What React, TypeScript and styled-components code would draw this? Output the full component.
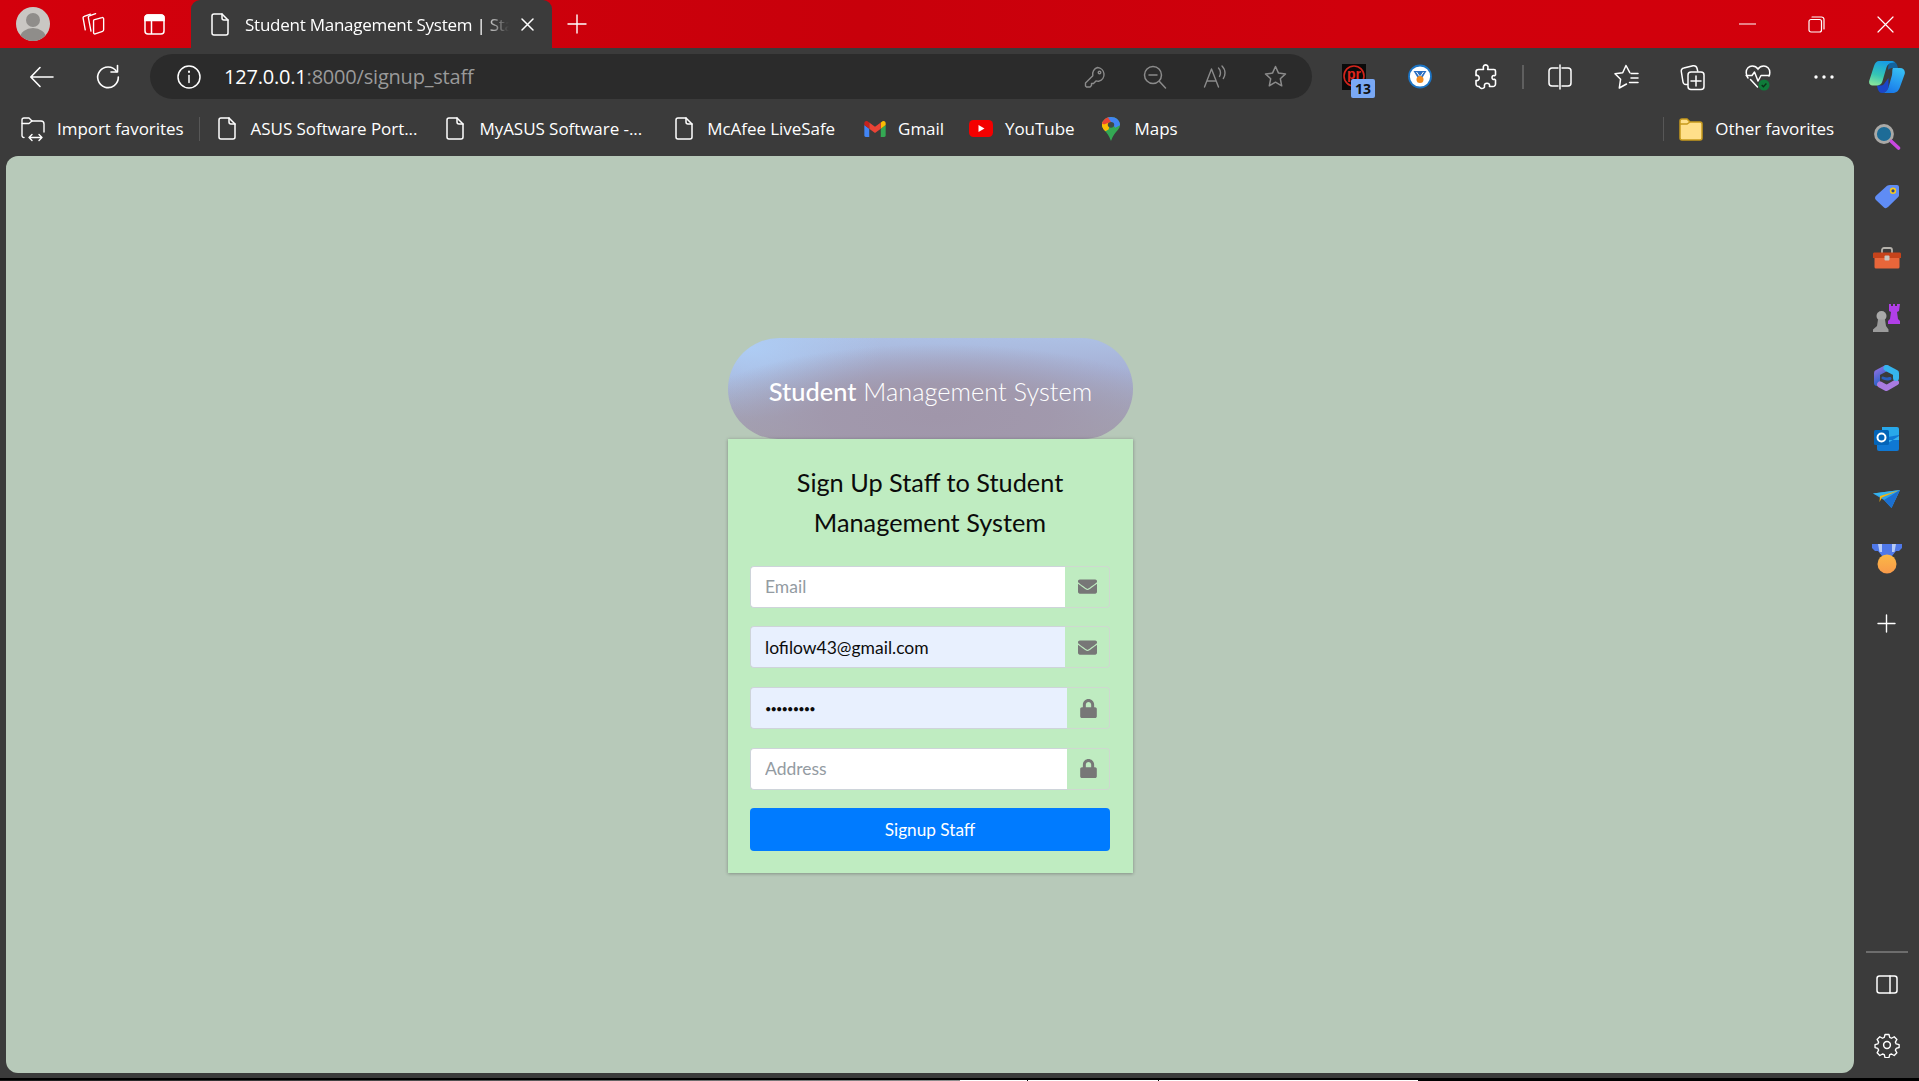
import styled, { createGlobalStyle } from "styled-components";
import type { ReactNode } from "react";
import { FaEnvelope, FaLock } from "react-icons/fa";

const GlobalStyle = createGlobalStyle`
  html, body {
    margin: 0;
    padding: 0;
    background: #3b3b3b;
    overflow: hidden;
  }
  * {
    box-sizing: border-box;
  }
`;

const chromeFont = `"Open Sans", "Noto Sans", sans-serif`;
const pageFont = `Lato, "Noto Sans", sans-serif`;

const Window = styled.div`
  width: 1919px;
  height: 1081px;
  display: flex;
  flex-direction: column;
  background: #3b3b3b;
  color: #fff;
  font-family: ${chromeFont};
  overflow: hidden;
`;

/* title bar */
const TitleBar = styled.div`
  height: 48px;
  flex: none;
  display: flex;
  align-items: center;
  padding-left: 16px;
  background: linear-gradient(90deg, #d3000c 0%, #c8000b 45%, #d0000c 70%, #d2000c 100%);
`;

const Avatar = styled.div`
  width: 34px;
  height: 34px;
  flex: none;
  display: flex;
`;

const TitleButton = styled.div<{ $w: number; $ml?: number }>`
  width: ${(p) => p.$w}px;
  height: 48px;
  flex: none;
  margin-left: ${(p) => p.$ml ?? 0}px;
  display: flex;
  align-items: center;
  justify-content: center;
`;

const Tab = styled.div`
  width: 361px;
  height: 48px;
  margin-left: 5px;
  flex: none;
  display: flex;
  align-items: center;
  padding-left: 20px;
  background: #3b3b3b;
  border-radius: 9px 9px 0 0;
`;

const TabTitle = styled.div`
  width: 264px;
  margin: 0 12px 0 16px;
  font-size: 17px;
  letter-spacing: -0.25px;
  white-space: nowrap;
  overflow: hidden;
  -webkit-mask-image: linear-gradient(90deg, #000 90%, transparent 100%);
  mask-image: linear-gradient(90deg, #000 90%, transparent 100%);
`;

const WindowControls = styled.div`
  margin-left: auto;
  display: flex;
`;

/* address row */
const Toolbar = styled.div`
  height: 58px;
  flex: none;
  display: flex;
  align-items: center;
  padding: 0 0 1px 9px;
`;

const Slot = styled.div<{ $w?: number }>`
  width: ${(p) => p.$w ?? 66}px;
  height: 44px;
  flex: none;
  display: flex;
  align-items: center;
  justify-content: center;
  position: relative;
`;

const AddressBar = styled.div`
  width: 1162px;
  height: 45px;
  margin: 0 9px;
  flex: none;
  display: flex;
  align-items: center;
  padding: 0 7px 0 27px;
  background: #2b2b2b;
  border-radius: 23px;
`;

const Url = styled.div`
  margin-left: 23px;
  font-size: 20px;
  letter-spacing: -0.2px;
  color: #fff;
  span {
    color: #9a9a9a;
  }
`;

const AddressTools = styled.div`
  margin-left: auto;
  display: flex;
`;

const ToolSeparator = styled.div`
  width: 2px;
  height: 24px;
  margin: 0 3px;
  flex: none;
  background: #5f5f5f;
`;

const Badge = styled.div`
  position: absolute;
  left: 30px;
  top: 24px;
  width: 24px;
  height: 19px;
  border-radius: 2px;
  background: #7aa9f5;
  color: #101010;
  font-size: 14px;
  font-weight: 700;
  line-height: 19px;
  text-align: center;
`;

/* everything under the address row */
const Main = styled.div`
  flex: 1;
  min-height: 0;
  display: flex;
`;

const LeftColumn = styled.div`
  width: 1854px;
  flex: none;
  display: flex;
  flex-direction: column;
`;

const FavoritesBar = styled.div`
  height: 50px;
  flex: none;
  display: flex;
  align-items: center;
  padding: 0 20px 5px 21px;
  font-size: 17px;
  letter-spacing: -0.05px;
  white-space: nowrap;
`;

const Favorite = styled.div<{ $gap: number; $ml: number }>`
  display: flex;
  align-items: center;
  gap: ${(p) => p.$gap}px;
  margin-left: ${(p) => p.$ml}px;
`;

const FavSeparator = styled.div<{ $ml: number; $auto?: boolean }>`
  width: 1px;
  height: 24px;
  margin-left: ${(p) => (p.$auto ? "auto" : `${p.$ml}px`)};
  background: #575757;
`;

const Content = styled.div`
  flex: 1;
  min-height: 0;
  margin: 0 0 5px 6px;
  padding: 182px 0 0 1px;
  display: flex;
  flex-direction: column;
  align-items: center;
  background: #b7c9b9;
  border-radius: 12px;
  font-family: ${pageFont};
`;

const Pill = styled.div`
  width: 405px;
  height: 101px;
  flex: none;
  padding-top: 4px;
  display: flex;
  align-items: center;
  justify-content: center;
  border-radius: 51px 51px 50px 50px;
  color: #fff;
  font-size: 25.4px;
  font-weight: 300;
  background:
    radial-gradient(ellipse 62% 72% at 52% 78%, rgba(160, 150, 170, 1) 0%, rgba(161, 152, 172, 0.95) 45%, rgba(163, 158, 180, 0) 100%),
    radial-gradient(ellipse 130px 70px at 6% 10%, rgba(174, 205, 245, 0.95), rgba(174, 205, 245, 0) 100%),
    linear-gradient(180deg, #adc0e4 0%, #a6b0d4 35%, #a4a6bc 70%, #a4a1ac 100%);
  b {
    font-weight: 500;
  }
`;

const Card = styled.div`
  width: 405px;
  flex: none;
  padding: 23px 23px 22px 22px;
  background: #bfecc1;
  box-shadow: 0 0 4px rgba(0, 0, 0, 0.13), 0 1px 3px rgba(0, 0, 0, 0.2);
`;

const Heading = styled.h1`
  margin: 0 0 23.7px;
  font-size: 25.3px;
  font-weight: 400;
  line-height: 40px;
  text-align: center;
  color: #0b0b0b;
`;

const Field = styled.div`
  height: 42px;
  margin-bottom: 18.67px;
  display: flex;
`;

const TextInput = styled.input<{ $wide?: boolean; $filled?: boolean }>`
  width: ${(p) => (p.$wide ? 317 : 315)}px;
  height: 100%;
  flex: none;
  padding: 0 14px;
  border: 1px solid #ced4da;
  border-right: 0;
  border-radius: 4px 0 0 4px;
  outline: none;
  background: ${(p) => (p.$filled ? "#e8f0fe" : "#fff")};
  color: #0c0c0c;
  font-family: ${pageFont};
  font-size: 17.5px;
  &[type="password"] {
    font-size: 11px;
    letter-spacing: -0.85px;
  }
  &::placeholder {
    color: #939ba2;
    opacity: 1;
  }
`;

const Addon = styled.div`
  flex: 1;
  display: flex;
  align-items: center;
  justify-content: center;
  padding-left: 1px;
  border: 1px solid #ced9cf;
  border-left: 0;
  border-radius: 0 4px 4px 0;
  color: #777;
  font-size: 19px;
`;

const SubmitButton = styled.button`
  display: block;
  width: 100%;
  height: 43px;
  border: 0;
  border-radius: 4px;
  background: #007bff;
  color: #fff;
  font-family: ${pageFont};
  font-size: 17.2px;
  font-weight: 400;
`;

/* right sidebar */
const Sidebar = styled.div`
  width: 65px;
  flex: none;
  padding: 1px 0 3px;
  display: flex;
  flex-direction: column;
  align-items: center;
`;

const SideSlot = styled.div<{ $mt?: number }>`
  height: 60.3px;
  width: 100%;
  flex: none;
  margin-top: ${(p) => p.$mt ?? 0}px;
  display: flex;
  align-items: center;
  justify-content: center;
`;

const SideDivider = styled.div`
  width: 42px;
  height: 2px;
  margin-top: auto;
  margin-bottom: 1px;
  flex: none;
  background: #6d6d6d;
`;

const BottomEdge = styled.div`
  height: 3px;
  flex: none;
  display: flex;
  align-items: flex-end;
  background: #000;
`;

const EdgePiece = styled.div<{ $w: number; $bg: string }>`
  width: ${(p) => p.$w}px;
  height: 1px;
  flex: none;
  background: ${(p) => p.$bg};
`;

const Line = ({ w, h, vb, children, sw = 1.5, color = "#fff" }: { w: number; h: number; vb?: string; children: ReactNode; sw?: number; color?: string }) => (
  <svg width={w} height={h} viewBox={vb ?? `0 0 ${w} ${h}`} fill="none" stroke={color} strokeWidth={sw} strokeLinecap="round" strokeLinejoin="round">
    {children}
  </svg>
);

const FileIcon = () => (
  <Line w={18} h={23}>
    <path d="M3 1h8l6 6v13a2 2 0 0 1-2 2H3a2 2 0 0 1-2-2V3a2 2 0 0 1 2-2z" />
    <path d="M11 1v4a2 2 0 0 0 2 2h4" />
  </Line>
);

const PersonAvatar = () => (
  <svg width={34} height={34} viewBox="0 0 34 34">
    <defs>
      <clipPath id="avatarClip">
        <circle cx="17" cy="17" r="17" />
      </clipPath>
    </defs>
    <g clipPath="url(#avatarClip)">
      <rect width="34" height="34" fill="#c9c7c3" />
      <circle cx="17" cy="13" r="7" fill="#8f8d8a" />
      <ellipse cx="17" cy="31" rx="13" ry="10" fill="#8f8d8a" />
    </g>
  </svg>
);

const WorkspacesIcon = () => (
  <Line w={26} h={26} vb="0 0 25 25" sw={1.3}>
    <path d="M11 3 5 5.200a1.500 1.500 0 0 0-1 1.900l2 11" />
    <path d="M16 2.500 10 4.600a1.500 1.500 0 0 0-1 1.800l2.500 13" />
    <path d="M14.300 8.500 22 6.300a1.300 1.300 0 0 1 1.700 1.200v10.600a1.500 1.500 0 0 1-1 1.400L15.600 22a1.200 1.200 0 0 1-1.600-1.200V9.800a1.400 1.400 0 0 1 .3-1.300z" />
  </Line>
);

const VerticalTabsIcon = () => (
  <svg width={21} height={21} viewBox="0 0 21 21" fill="none" stroke="#fff" strokeWidth="1.500">
    <rect x="1" y="1" width="19" height="19" rx="3" />
    <path d="M1 6.500V4a3 3 0 0 1 3-3h13a3 3 0 0 1 3 3v2.500z" fill="#fff" />
    <path d="M7.500 6.500V20" />
  </svg>
);

const CloseIcon = ({ size = 14, sw = 1.5 }: { size?: number; sw?: number }) => (
  <Line w={size} h={size} sw={sw}>
    <path d={`M1 1 ${size - 1} ${size - 1}M${size - 1} 1 1 ${size - 1}`} />
  </Line>
);

const PlusIcon = ({ size = 20 }: { size?: number }) => (
  <Line w={size} h={size} sw={1.4}>
    <path d={`M${size / 2} 1v${size - 2}M1 ${size / 2}h${size - 2}`} />
  </Line>
);

const BackIcon = () => (
  <Line w={26} h={24} sw={1.6}>
    <path d="M24 12H2M11 2.500 1.800 12l9.200 9.500" />
  </Line>
);

const ReloadIcon = () => (
  <Line w={26} h={26} sw={1.6}>
    <path d="M21.500 7.500A10.300 10.300 0 1 0 23.300 13" />
    <path d="M22.500 1.500v6.500H16" />
  </Line>
);

const InfoIcon = () => (
  <Line w={24} h={24} sw={1.5}>
    <circle cx="12" cy="12" r="11" />
    <path d="M12 10.500v7" />
    <path d="M12 6.500v.5" strokeWidth="2" />
  </Line>
);

const KeyIcon = () => (
  <Line w={22} h={22} sw={1.4} color="#8b8b8b">
    <path d="M13.500 1.500a7 7 0 0 1 1.500 13.700 7 7 0 0 1-3-.3L9.500 17.500H7.500v2L6 21H2.500L1.500 20v-3l7.300-7.300a7 7 0 0 1 4.700-8.200z" />
    <circle cx="15.500" cy="6.500" r="1.300" />
  </Line>
);

const ZoomOutIcon = () => (
  <Line w={24} h={24} sw={1.5} color="#8b8b8b">
    <circle cx="10" cy="10" r="8.500" />
    <path d="m16.500 16.500 6 6.500M6 10h8" />
  </Line>
);

const ReadAloudIcon = () => (
  <Line w={24} h={24} sw={1.4} color="#8b8b8b">
    <path d="M1.500 22 8.500 4l7 18M4 16h9" />
    <path d="M15.500 3c1.500 1.500 2 3 2 4.800s-.4 2.600-1 3.700" />
    <path d="M19 1c2 2 3 4.300 3 7 0 2-.6 3.800-1.700 5.500" />
  </Line>
);

const StarIcon = () => (
  <Line w={25} h={25} sw={1.5} color="#8b8b8b">
    <path d="M12.500 2.500l3 6.600 7 .8-5.200 4.800 1.400 7.100-6.200-3.600-6.200 3.600 1.400-7.100L2.500 9.900l7-.8z" />
  </Line>
);

const PrExtension = () => (
  <svg width={24} height={26} viewBox="0 0 24 26">
    <rect width="24" height="26" fill="#0a0a0a" />
    <circle cx="12" cy="12" r="10" fill="none" stroke="#d3241c" strokeWidth="1.600" />
    <text x="12" y="15" fontSize="14" fontWeight="700" textAnchor="middle" fill="#e0241c" fontFamily="Liberation Sans, sans-serif">pr</text>
  </svg>
);

const MedalExtension = () => (
  <svg width={24} height={25} viewBox="0 0 24 25">
    <circle cx="12" cy="12.500" r="11" fill="#fff" stroke="#1c74c4" strokeWidth="1.800" />
    <path d="M5.500 7h13l-4 6.500h-5z" fill="#2b6fc2" />
    <path d="m8.500 8 3.500 5 3.500-5" fill="none" stroke="#fff" strokeWidth="1" />
    <circle cx="12" cy="15.500" r="3.500" fill="#f08a1e" />
  </svg>
);

const PuzzleIcon = () => (
  <Line w={24} h={28} sw={1.6}>
    <path d="M10 2.500c2-1.500 4.500 0 4 2.500l-.3 1.500H20a1.500 1.500 0 0 1 1.500 1.500v4l-1 .8c-1-.6-2.500 0-2.500 1.700s1.500 2.300 2.500 1.700l1 .8v4A2.500 2.500 0 0 1 19 23.500h-3.500c.5-2-.7-3.300-2.500-3.300s-3 1.300-2.500 3.300c.3 1.300-2 2.500-3.500 1.800-1-.5-1.800-1.300-1.800-1.800H4.500A2.500 2.500 0 0 1 2 21v-3.500c1.800.5 3.200-.7 3.200-2.500S3.800 12 2 12.500V9a2.500 2.500 0 0 1 2.500-2.500H9.500L9.300 5c-.1-1 .1-1.900.7-2.500z" />
  </Line>
);

const SplitIcon = () => (
  <Line w={24} h={26} sw={1.5}>
    <path d="M10 4H4a3 3 0 0 0-3 3v12a3 3 0 0 0 3 3h6M14 4h6a3 3 0 0 1 3 3v12a3 3 0 0 1-3 3h-6M12 1v24" />
  </Line>
);

const FavoritesListIcon = () => (
  <Line w={25} h={26} sw={1.5}>
    <path d="M15.800 8.600 12 1.500 8.700 8.800 1 9.800l5.600 5.400L5.300 24l7.200-4" />
    <path d="M17 9.500h7M17 14h7M15.500 18.500H24" />
  </Line>
);

const CollectionsIcon = () => (
  <Line w={25} h={28} sw={1.5}>
    <path d="M7.500 21.500H6a3 3 0 0 1-3-2.500L1.300 8.500A3 3 0 0 1 3.800 5L13 2.800c2-.3 3.500.5 4 2.500l.7 2.700" />
    <rect x="8" y="9" width="16" height="17.500" rx="3" />
    <path d="M16 13v10M11 18h10" />
  </Line>
);

const HealthIcon = () => (
  <svg width={26} height={28} viewBox="0 0 26 28" fill="none">
    <path d="M3 15C1.800 13.500 1.200 11.500 1.200 9.500 1.200 5.500 4 3 7.200 3c2.500 0 4.500 1 5.800 3 1.300-2 3.300-3 5.800-3 3.200 0 6 2.500 6 6.500 0 1.200-.2 2.500-.8 3.500" stroke="#fff" strokeWidth="1.500" strokeLinecap="round" />
    <path d="M1.200 12.500H7l2.500-3.500 3.500 9 3-5.500h8M5.500 16.500l7 7.500" stroke="#fff" strokeWidth="1.500" strokeLinecap="round" strokeLinejoin="round" />
    <circle cx="19" cy="22" r="5.500" fill="#0f7b3a" />
    <path d="m16.700 22 1.700 1.700 3-3.200" stroke="#0c2e18" strokeWidth="1.300" />
  </svg>
);

const DotsIcon = () => (
  <svg width={20} height={4} viewBox="0 0 20 4" fill="#fff">
    <circle cx="2" cy="2" r="1.700" />
    <circle cx="10" cy="2" r="1.700" />
    <circle cx="18" cy="2" r="1.700" />
  </svg>
);

const CopilotIcon = () => (
  <svg width={36} height={32} viewBox="0 0 36 32">
    <defs>
      <linearGradient id="cpA" x1="0.600" y1="0" x2="0.300" y2="1">
        <stop offset="0" stopColor="#169be6" />
        <stop offset="0.600" stopColor="#35c6b4" />
        <stop offset="1" stopColor="#86e49c" />
      </linearGradient>
      <linearGradient id="cpB" x1="0.700" y1="0" x2="0.300" y2="1">
        <stop offset="0" stopColor="#36bff5" />
        <stop offset="1" stopColor="#1877ea" />
      </linearGradient>
    </defs>
    <path d="M22 0c4 0 6 2 7 7h-5c-2 0-4 .5-5 2 0-5 1-8 3-9z" fill="#13629c" />
    <path d="M8 24.500h4c2 0 3.500-1.500 4-3l3.500-4.500v9c-1 4-3.500 6-6.500 6-3 0-4.500-3.500-5-7.500z" fill="#1b45c8" />
    <path d="M10 0h12c2 0 3 .5 4 1.500-6-.5-8 2.500-9 6.500l-3.500 12c-1 3.500-3 4.500-6.500 4.500H3.500C1 24.500-.5 22.500.3 19.500L5 5c1-3.500 3-5 5-5z" fill="url(#cpA)" />
    <path d="M24 7h7c3.500 0 5.500 2.500 4.700 6L31 26c-1.500 4.500-4 6-8 6H13c3 0 5.500-2 6.500-5.500L23 14c.5-3 0-6 1-7z" fill="url(#cpB)" />
  </svg>
);

const ImportIcon = () => (
  <Line w={25} h={26} sw={1.4}>
    <path d="M3 21.500A2 2 0 0 1 1 19.500V4a2 2 0 0 1 2-2h5l3 3h9a3 3 0 0 1 3 3v8" />
    <path d="M1.200 7.500H8l3-2.500" />
    <path d="M8 21.500h13M11 18.500l-3 3 3 3M18 18.500l3 3-3 3" />
  </Line>
);

const GmailIcon = () => (
  <svg width={22} height={16} viewBox="0 0 24 18">
    <path d="M1.600 18h3.900V8.700L0 4.600v11.800C0 17.300.7 18 1.600 18z" fill="#4285f4" />
    <path d="M18.500 18h3.900c.9 0 1.600-.7 1.600-1.600V4.600l-5.500 4.100z" fill="#34a853" />
    <path d="M18.500 1.600v7.100L24 4.600V2.400c0-2-2.300-3.100-3.900-1.900z" fill="#fbbc04" />
    <path d="M5.500 8.700V1.600L12 6.500l6.500-4.900v7.100L12 13.600z" fill="#ea4335" />
    <path d="M0 2.400v2.200l5.500 4.100V1.600L3.900.5C2.300-.7 0 .4 0 2.400z" fill="#c5221f" />
  </svg>
);

const YoutubeIcon = () => (
  <svg width={24} height={17} viewBox="0 0 24 17">
    <rect width="24" height="17" rx="4.500" fill="#f40000" />
    <path d="m9.500 5 6 3.500-6 3.500z" fill="#fff" />
  </svg>
);

const MapsIcon = () => (
  <svg width={18} height={24} viewBox="0 0 19 29" preserveAspectRatio="none">
    <defs>
      <clipPath id="pinClip">
        <path d="M9.500 0C4.200 0 0 4.200 0 9.500c0 2.500.9 4.300 2.300 6.300 2.800 3.800 5.600 7.500 7.200 13.200 1.600-5.700 4.400-9.400 7.200-13.200 1.400-2 2.300-3.800 2.300-6.300C19 4.200 14.800 0 9.500 0z" />
      </clipPath>
    </defs>
    <g clipPath="url(#pinClip)">
      <rect width="19" height="29" fill="#34a853" />
      <path d="M0 5h9.500v4L0 17z" fill="#fbbc04" />
      <path d="M0 0h8l3 5-6 6-5-3z" fill="#ea4335" />
      <path d="M6 0h13v10l-5 3-5-8z" fill="#4285f4" />
      <path d="M0 10 9 6l-2 9-5 3z" fill="#fbbc04" />
    </g>
    <circle cx="9.500" cy="9.500" r="3.400" fill="#3e4a48" />
  </svg>
);

const FolderIcon = () => (
  <svg width={24} height={26} viewBox="0 0 24 26">
    <path d="M1 5a2 2 0 0 1 2-2h5l3 3h10a2 2 0 0 1 2 2v14a2 2 0 0 1-2 2H3a2 2 0 0 1-2-2z" fill="#ffdf8a" stroke="#c79a1d" strokeWidth="1.500" />
    <path d="M1 8h7l3-2" fill="none" stroke="#c79a1d" strokeWidth="1.500" />
  </svg>
);

const SearchApp = () => (
  <svg width={28} height={28} viewBox="0 0 28 28">
    <circle cx="11" cy="11" r="8.500" fill="#1d6c97" stroke="#aaa9a6" strokeWidth="2.800" />
    <path d="m18.500 18.500 7 6.500" stroke="#c948e0" strokeWidth="3.600" strokeLinecap="round" />
  </svg>
);

const TagApp = () => (
  <svg width={26} height={26} viewBox="0 0 26 26">
    <path d="M16 1h7a2 2 0 0 1 2 2v8c0 1-.3 1.500-1 2.200L14 23c-1.500 1.500-3 1.500-4.300.2L2 16c-1.300-1.300-1.300-3 0-4.300L13 1.800c1-.7 2-.8 3-.8z" fill="#5f8cf5" />
    <circle cx="19" cy="6.800" r="2.400" fill="#27408e" stroke="#f3c81e" strokeWidth="1.600" />
  </svg>
);

const ToolboxApp = () => (
  <svg width={28} height={22} viewBox="0 0 28 22">
    <path d="M9 6V3a2 2 0 0 1 2-2h6a2 2 0 0 1 2 2v3" fill="none" stroke="#b5b2ac" strokeWidth="1.800" />
    <path d="M0 7c0-1 .6-1.500 1.500-1.500h25C27.400 5.500 28 6 28 7v4H0z" fill="#c6431b" />
    <path d="M1.500 11h25v9a1.500 1.500 0 0 1-1.500 1.500H3A1.500 1.500 0 0 1 1.500 20z" fill="#e8663a" />
    <rect x="11.500" y="8.500" width="5" height="5" rx="1" fill="#c9c6c0" />
  </svg>
);

const ChessApp = () => (
  <svg width={28} height={29} viewBox="0 0 28 29">
    <path d="M16 0h2v2h2V0h2v2h2V0h3l-1 7-2 1 1 7 2 2v3H15v-3l2-2 1-7-2-1z" fill="#b13fe8" />
    <circle cx="8.500" cy="12" r="5" fill="#a9a9a9" />
    <path d="M5 15.500h7l1 6.500 2.500 3.500V28H0v-2.500L4 22z" fill="#9b9b9b" />
  </svg>
);

const OfficeApp = () => (
  <svg width={25} height={26} viewBox="0 0 25 26" fill="none" strokeWidth="6" strokeLinejoin="round" strokeLinecap="round">
    <defs>
      <linearGradient id="officeLeft" x1="0" y1="0" x2="0.400" y2="1">
        <stop offset="0" stopColor="#8d6fe0" />
        <stop offset="1" stopColor="#2a62c8" />
      </linearGradient>
    </defs>
    <path d="M12.500 3 3 8v10" stroke="url(#officeLeft)" />
    <path d="M22 17.500 12.500 23 6 19.500" stroke="#a97be0" />
    <path d="M12.500 3 22 8v5" stroke="#35b4ec" />
    <path d="M9 13c2 1 4 1.500 7 .5" stroke="#2a5fbd" strokeWidth="3" />
  </svg>
);

const OutlookApp = () => (
  <svg width={25} height={24} viewBox="0 0 25 24">
    <path d="M8 0h15a2 2 0 0 1 2 2v10H8z" fill="#28a8ea" />
    <path d="M3 12 25 8v14a2 2 0 0 1-2 2H5a2 2 0 0 1-2-2z" fill="#0f78d4" />
    <path d="m25 9-11 7-11-6v3h22z" fill="#50d9ff" opacity=".6" />
    <rect y="3" width="15" height="15" rx="1.500" fill="#0364b8" />
    <circle cx="7.500" cy="10.500" r="4" fill="none" stroke="#fff" strokeWidth="2" />
  </svg>
);

const PlaneApp = () => (
  <svg width={27} height={18} viewBox="0 0 27 18">
    <path d="M0 3.500 27 0 18.500 18 11 10z" fill="#2f9fe8" />
    <path d="M0 3.500 27 0 7 6z" fill="#36b5ee" />
    <path d="M27 0 7 6l-.5 6L9 7.500z" fill="#f7b70f" />
    <path d="M27 0 11 10l7.500 8z" fill="#1b6fd0" />
  </svg>
);

const MedalApp = () => (
  <svg width={30} height={30} viewBox="0 0 30 30">
    <defs>
      <linearGradient id="medalFace" x1="0" y1="0" x2="0" y2="1">
        <stop offset="0" stopColor="#fbb846" />
        <stop offset="1" stopColor="#f99a4a" />
      </linearGradient>
    </defs>
    <path d="M0 0h30v4l-3 3h-3l-4 5H10L6 7H3L0 4z" fill="#4f78e8" />
    <path d="M6 0h4v8H7.500zM20 0h4l-1.500 8H20z" fill="#b7cbf7" />
    <circle cx="15" cy="20" r="9.500" fill="url(#medalFace)" />
  </svg>
);

const PanelIcon = () => (
  <Line w={22} h={19} sw={1.5}>
    <rect x="1" y="1" width="20" height="17" rx="2.500" />
    <path d="M14 1v17" />
  </Line>
);

const GearIcon = () => (
  <Line w={26} h={26} sw={1.5}>
    <circle cx="13" cy="13" r="3.400" />
    <path d="M10.800 1.300h4.400l.8 3.300 2 .9 3-1.700 3 3-1.700 3 .9 2 3.300.8v3.200l-3.300 1-.9 1.900 1.700 3-3 3-3-1.700-2 .8-.8 3.300h-4.400l-.8-3.300-2-.8-3 1.700-3-3 1.700-3-.9-1.900-3.100-1v-3.200l3.100-.8.9-2-1.700-3 3-3 3 1.700 2-.9z" transform="translate(1.300 1.300) scale(.9)" />
  </Line>
);

const fields = [
  { placeholder: "Email", value: "", type: "text", icon: <FaEnvelope /> },
  { placeholder: "Name", value: "lofilow43@gmail.com", type: "text", icon: <FaEnvelope />, filled: true },
  { placeholder: "Password", value: "secret123", type: "password", icon: <FaLock />, wide: true, filled: true },
  { placeholder: "Address", value: "", type: "text", icon: <FaLock />, wide: true },
];

export default function App() {
  return (
    <Window>
      <GlobalStyle />
      <TitleBar>
        <Avatar>
          <PersonAvatar />
        </Avatar>
        <TitleButton $w={62} $ml={11}>
          <WorkspacesIcon />
        </TitleButton>
        <TitleButton $w={63}>
          <VerticalTabsIcon />
        </TitleButton>
        <Tab>
          <FileIcon />
          <TabTitle>Student Management System | Staff Signup</TabTitle>
          <CloseIcon size={13} />
        </Tab>
        <TitleButton $w={42} $ml={4}>
          <PlusIcon />
        </TitleButton>
        <WindowControls>
          <TitleButton $w={69}>
            <Line w={17} h={2} sw={1.2}>
              <path d="M0 1h17" />
            </Line>
          </TitleButton>
          <TitleButton $w={69}>
            <Line w={17} h={17} sw={1.2}>
              <rect x="1" y="3.500" width="12.500" height="12.500" rx="2" />
              <path d="M4 1h9.500A2.500 2.500 0 0 1 16 3.500V13" />
            </Line>
          </TitleButton>
          <TitleButton $w={68}>
            <CloseIcon size={17} sw={1.2} />
          </TitleButton>
        </WindowControls>
      </TitleBar>

      <Toolbar>
        <Slot>
          <BackIcon />
        </Slot>
        <Slot>
          <ReloadIcon />
        </Slot>
        <AddressBar>
          <InfoIcon />
          <Url>
            127.0.0.1<span>:8000/signup_staff</span>
          </Url>
          <AddressTools>
            <Slot $w={60}><KeyIcon /></Slot>
            <Slot $w={60}><ZoomOutIcon /></Slot>
            <Slot $w={60}><ReadAloudIcon /></Slot>
            <Slot $w={60}><StarIcon /></Slot>
          </AddressTools>
        </AddressBar>
        <Slot>
          <PrExtension />
          <Badge>13</Badge>
        </Slot>
        <Slot><MedalExtension /></Slot>
        <Slot><PuzzleIcon /></Slot>
        <ToolSeparator />
        <Slot><SplitIcon /></Slot>
        <Slot><FavoritesListIcon /></Slot>
        <Slot><CollectionsIcon /></Slot>
        <Slot><HealthIcon /></Slot>
        <Slot><DotsIcon /></Slot>
        <Slot $w={60}><CopilotIcon /></Slot>
      </Toolbar>

      <Main>
        <LeftColumn>
          <FavoritesBar>
            <Favorite $gap={11} $ml={0}><ImportIcon />Import favorites</Favorite>
            <FavSeparator $ml={15} />
            <Favorite $gap={15} $ml={18}><FileIcon />ASUS Software Port...</Favorite>
            <Favorite $gap={15} $ml={29}><FileIcon />MyASUS Software -...</Favorite>
            <Favorite $gap={14} $ml={33}><FileIcon />McAfee LiveSafe</Favorite>
            <Favorite $gap={12} $ml={29}><GmailIcon />Gmail</Favorite>
            <Favorite $gap={12} $ml={25}><YoutubeIcon />YouTube</Favorite>
            <Favorite $gap={15} $ml={27}><MapsIcon />Maps</Favorite>
            <FavSeparator $ml={0} $auto />
            <Favorite $gap={12} $ml={15}><FolderIcon />Other favorites</Favorite>
          </FavoritesBar>
          <Content>
            <Pill>
              <span>
                <b>Student</b> Management System
              </span>
            </Pill>
            <Card>
              <Heading>Sign Up Staff to Student Management System</Heading>
              {fields.map((f) => (
                <Field key={f.placeholder}>
                  <TextInput
                    type={f.type}
                    placeholder={f.placeholder}
                    defaultValue={f.value}
                    $wide={f.wide}
                    $filled={f.filled}
                  />
                  <Addon>{f.icon}</Addon>
                </Field>
              ))}
              <SubmitButton type="button">Signup Staff</SubmitButton>
            </Card>
          </Content>
        </LeftColumn>
        <Sidebar>
          <SideSlot><SearchApp /></SideSlot>
          <SideSlot><TagApp /></SideSlot>
          <SideSlot><ToolboxApp /></SideSlot>
          <SideSlot><ChessApp /></SideSlot>
          <SideSlot><OfficeApp /></SideSlot>
          <SideSlot><OutlookApp /></SideSlot>
          <SideSlot><PlaneApp /></SideSlot>
          <SideSlot><MedalApp /></SideSlot>
          <SideSlot $mt={4}><PlusIcon size={19} /></SideSlot>
          <SideDivider />
          <SideSlot><PanelIcon /></SideSlot>
          <SideSlot><GearIcon /></SideSlot>
        </Sidebar>
      </Main>
      <BottomEdge>
        <EdgePiece $w={960} $bg="linear-gradient(90deg, #1a1a1a, #8f8f8f)" />
        <EdgePiece $w={67} $bg="#fff" />
        <EdgePiece $w={1} $bg="#000" />
        <EdgePiece $w={130} $bg="#fff" />
        <EdgePiece $w={1} $bg="#000" />
        <EdgePiece $w={259} $bg="#fff" />
      </BottomEdge>
    </Window>
  );
}
